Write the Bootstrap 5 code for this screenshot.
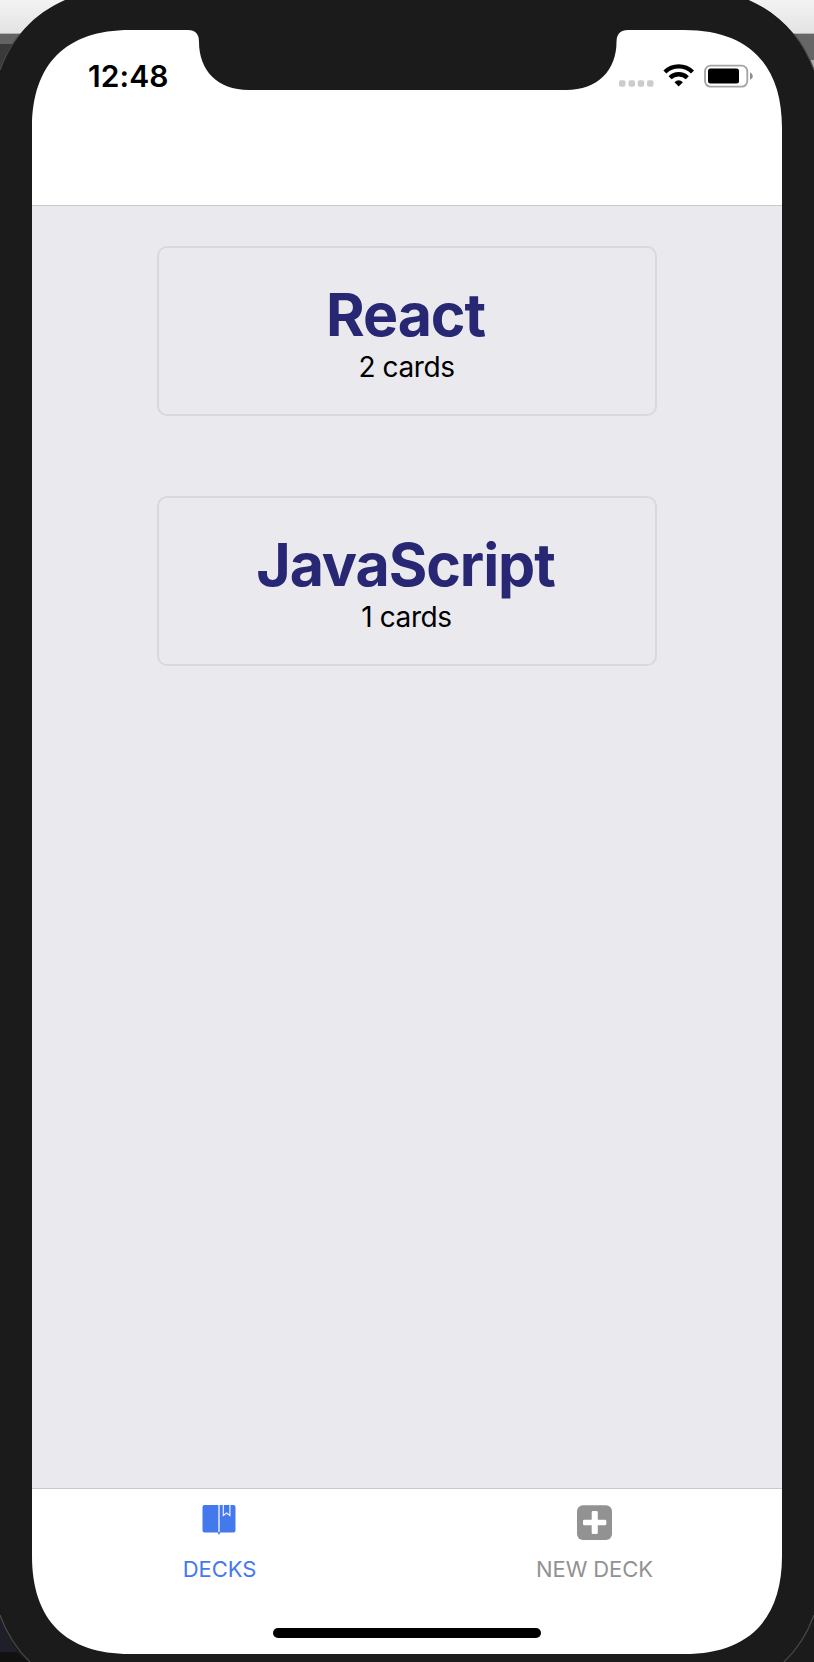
<!DOCTYPE html>
<html lang="en">
<head>
<meta charset="utf-8">
<meta name="viewport" content="width=device-width, initial-scale=1">
<title>Decks</title>
<link href="https://cdn.jsdelivr.net/npm/bootstrap@5.3.0/dist/css/bootstrap.min.css" rel="stylesheet">
<style>
body{width:814px;height:1662px;background:#1b1b1b;font-family:Inter,"Liberation Sans",sans-serif;color:#000}
.phone-screen{width:750px;height:1624px;margin:30px 32px 8px;background:#e9e9ee}
.bezel{inset:0;pointer-events:none}
.top-area{height:176px;background:#fff;border-bottom:1px solid #c9c9cd;padding:28px 29px 0 56px}
.clock{font-size:30px;font-weight:600;line-height:36px;letter-spacing:.1px}
.deck-list{padding-top:40px;gap:80px}
.deck{width:500px;height:170px;border:2px solid #d8d8dd;border-radius:10px;background:transparent;color:#000}
.deck-name{font-size:59px;font-weight:700;line-height:72px;letter-spacing:-1.1px;color:#272773;margin-top:31px;padding-right:3px}
.deck-count{font-size:28px;line-height:34px;letter-spacing:-.4px;margin-top:-1px;padding-right:1px}
.tab-area{height:166px;background:#fff;border-top:1px solid #c9c9cd}
.tab-item{color:#929292;font-size:22px;line-height:28px;letter-spacing:-.1px;padding-top:16px}
.tab-item.active{color:#4479ee}
.tab-item svg{height:36px;margin-bottom:14px}
.home-bar{width:268px;height:10px;border-radius:5px;background:#000;margin-bottom:16px}
</style>
</head>
<body class="position-relative overflow-hidden">
<main class="phone-screen d-flex flex-column float-start">
  <header class="top-area d-flex justify-content-between align-items-start">
    <span class="clock">12:48</span>
    <svg width="136" height="36" viewBox="617 58 136 36" aria-label="Status">
      <g fill="#ccc"><rect x="619" y="80.300" width="6.500" height="6.500" rx="2"/><rect x="628.500" y="80.300" width="6.500" height="6.500" rx="2"/><rect x="637.700" y="80.300" width="6.500" height="6.500" rx="2"/><rect x="647" y="80.300" width="6.500" height="6.500" rx="2"/></g>
      <g fill="none" stroke="#000" stroke-width="4.300"><path d="M664.900 72a19.600 19.600 0 0 1 27.600 0"/><path d="M670.100 77.800a12.200 12.200 0 0 1 17.200 0"/></g>
      <path d="M674.500 82.300Q678.700 78.300 682.900 82.300L678.700 86.600Z"/>
      <rect x="705" y="65.700" width="42.300" height="20.900" rx="5.500" fill="none" stroke="#a3a3a3" stroke-width="1.800"/>
      <rect x="708" y="68.600" width="31" height="15" rx="2.500"/>
      <path d="M750 72.300q2.800 1.400 2.800 3.900t-2.800 3.900z" fill="#8c8c8c"/>
    </svg>
  </header>
  <section class="deck-list d-flex flex-column align-items-center flex-grow-1">
    <article class="deck text-center"><h1 class="deck-name mb-0">React</h1><p class="deck-count mb-0">2 cards</p></article>
    <article class="deck text-center"><h1 class="deck-name mb-0">JavaScript</h1><p class="deck-count mb-0">1 cards</p></article>
  </section>
  <footer class="tab-area d-flex flex-column justify-content-between align-items-center">
    <nav class="row g-0 w-100 text-center">
      <a class="col-6 tab-item active d-flex flex-column align-items-center text-decoration-none">
        <svg width="36" viewBox="0 0 36 36"><path fill="currentColor" d="M2.500 0h29a2 2 0 0 1 2 2v23.500a2 2 0 0 1-2 2H18.300l-1.300 2.500-1.300-2.500H2.500a2 2 0 0 1-2-2V2a2 2 0 0 1 2-2z"/><path d="M17 0v27" stroke="#c5d6fb" stroke-width="1.800"/><path d="M21.300 0v10.500l3.300-2.400 3.300 2.400V0" stroke="#e9f0fe" stroke-width="1.200" fill="none"/></svg>
        <span>DECKS</span>
      </a>
      <a class="col-6 tab-item d-flex flex-column align-items-center text-decoration-none">
        <svg width="35" viewBox="0 0 35 36"><rect y=".2" width="35" height="34.800" rx="6" fill="currentColor"/><path fill="#fff" d="M16 6h3.500a1.300 1.300 0 0 1 1.300 1.300v7.400H28a1.300 1.300 0 0 1 1.300 1.300v3a1.300 1.300 0 0 1-1.300 1.300h-7.200v7.400a1.300 1.300 0 0 1-1.300 1.300H16a1.300 1.300 0 0 1-1.300-1.300v-7.400H7.300A1.300 1.300 0 0 1 6 19v-3a1.300 1.300 0 0 1 1.300-1.300h7.400V7.300A1.300 1.300 0 0 1 16 6z"/></svg>
        <span>NEW DECK</span>
      </a>
    </nav>
    <div class="home-bar"></div>
  </footer>
</main>
<svg class="bezel position-absolute" width="814" height="1662" viewBox="0 0 814 1662" aria-hidden="true">
  <defs><linearGradient id="lightBar" x2="0" y2="1"><stop stop-color="#f3f3f3"/><stop offset="1" stop-color="#e3e3e3"/></linearGradient></defs>
  <path fill="#1b1b1b" fill-rule="evenodd" d="M0 0H814V1662H0ZM32 128V1556C32 1620 66 1654 130 1654H684C748 1654 782 1620 782 1556V128C782 64 748 30 684 30H628Q616.500 30 616.500 42C616.500 70 598 90 566 90H249C217 90 199 70 199 42Q199 30 188 30H130C66 30 32 64 32 128Z"/>
  <clipPath id="tl"><path d="M0 0H65C33 14 12 38 0 70Z"/></clipPath>
  <g clip-path="url(#tl)"><path fill="#3a3a3a" d="M0 0H70V75H0Z"/><path fill="#636363" d="M0 34H70V44H0Z"/><path fill="url(#lightBar)" d="M0 0H70V33H0Z"/><path fill="#b5b5b5" d="M0 33H70V34H0Z"/></g>
  <clipPath id="tr"><path d="M814 0H749C781 14 802 38 814 70Z"/></clipPath>
  <g clip-path="url(#tr)"><path fill="#aaa" d="M740 0H814V75H740Z"/><path fill="#666" d="M740 34H814V60H740Z"/><path fill="url(#lightBar)" d="M740 0H814V33H740Z"/><path fill="#b5b5b5" d="M740 33H814V34H740Z"/></g>
  <path fill="#1f1f29" d="M0 1615Q6 1634 17 1652H0Z"/><path fill="#111" d="M0 1652H17Q23 1659 30 1662H0Z"/>
  <path fill="none" stroke="#48484b" stroke-width="1.200" d="M0 70C5 56 12 44 20 34M814 70C809 56 802 44 794 34M0 1615Q10 1643 30 1662M814 1615Q804 1643 784 1662"/>
</svg>
<script src="https://cdn.jsdelivr.net/npm/bootstrap@5.3.0/dist/js/bootstrap.bundle.min.js"></script>
</body>
</html>
